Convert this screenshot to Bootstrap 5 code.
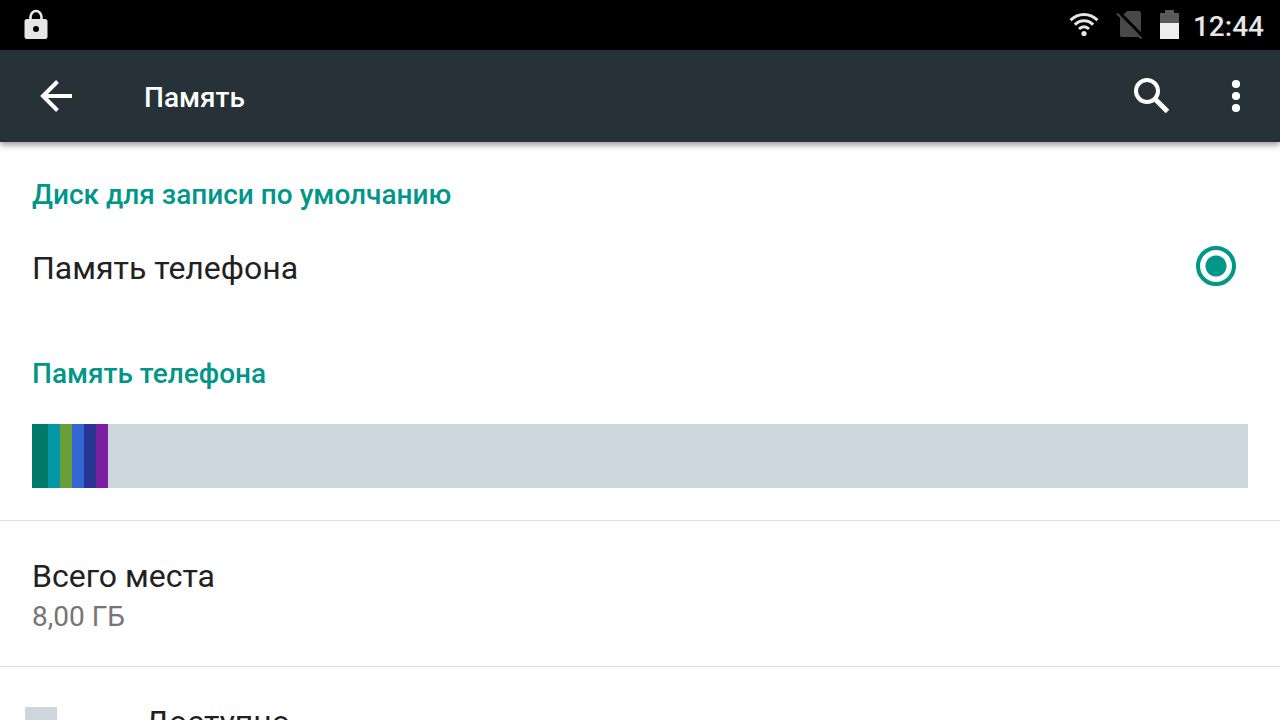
<!DOCTYPE html>
<html lang="ru">
<head>
<meta charset="utf-8">
<meta name="viewport" content="width=device-width, initial-scale=1">
<title>Память</title>
<link href="https://cdn.jsdelivr.net/npm/bootstrap@5.3.0/dist/css/bootstrap.min.css" rel="stylesheet">
<style>
  body { font-family: Roboto, "Noto Sans", sans-serif; color: #212121; }
  .status-bar { height: 50px; background: #000; color: #e6e6e6; padding: 0 16px 0 24px; }
  .clock { font-size: 28px; line-height: 36px; font-weight: 500; padding: 4px 0 0 14px; }
  .app-bar { height: 92px; background: #263238; color: #fff; padding: 0 32px; box-shadow: 0 3px 6px rgba(0, 0, 0, .4); z-index: 1; }
  .app-title { font-size: 28px; line-height: 36px; font-weight: 500; padding: 4px 0 0 64px; }
  .icon-btn { width: 48px; height: 48px; }
  .search-btn { margin-right: 48px; }
  .menu-btn { width: 24px; }
  .settings { min-height: 0; overflow-y: auto; scrollbar-width: none; }
  .settings::-webkit-scrollbar { display: none; }
  .section-title { font-size: 28px; line-height: 36px; font-weight: 500; color: #009688; margin: 0; padding: 35px 32px 5px; }
  .row-title { font-size: 32px; line-height: 40px; }
  .row-sub { font-size: 28px; line-height: 42px; color: #757575; }
  .choice { height: 96px; padding: 0 44px 0 32px; margin-bottom: 7px; }
  .choice .row-title { padding-top: 4px; }
  .choice .form-check-input { width: 40px; height: 40px; margin: 0; border: 4px solid #009688; background: radial-gradient(circle, #009688 10px, transparent 11px); }
  .choice .form-check-input:focus { box-shadow: none; }
  .usage { height: 64px; margin: 27px 32px 32px; border-radius: 0; }
  .list-item { padding: 35px 32px 28px; border-top: 1px solid #dedede; }
  .legend-item { padding-left: 25px; }
  .swatch { width: 32px; height: 32px; margin: 5px 88px 0 0; }
  .c-free { background: #ced6dd; }
  .c-apps { background: #00796b; }
  .c-images { background: #0097a7; }
  .c-video { background: #689f38; }
  .c-audio { background: #3367d6; }
  .c-downloads { background: #283593; }
  .c-cache { background: #7b1fa2; }
</style>
</head>
<body class="bg-white">
<div class="d-flex flex-column vh-100 overflow-hidden">
  <div class="status-bar d-flex align-items-center flex-shrink-0">
    <svg width="24" height="32" viewBox="0 0 24 32" fill="none" aria-hidden="true">
      <path d="M6.500 12V8a5.500 6 0 0 1 11 0v4" stroke="#e6e6e6" stroke-width="2.600"/>
      <path fill="#e6e6e6" fill-rule="evenodd" d="M3 10h18a2.500 2.500 0 0 1 2.500 2.500v15a2.500 2.500 0 0 1-2.500 2.500H3a2.500 2.500 0 0 1-2.500-2.500v-15A2.500 2.500 0 0 1 3 10zm9 7a3 3 0 1 0 0 6 3 3 0 0 0 0-6z"/>
    </svg>
    <div class="d-flex align-items-center ms-auto">
      <svg width="32" height="32" viewBox="0 0 32 32" fill="none" stroke="#e6e6e6" stroke-width="3" aria-hidden="true">
        <path d="M2.500 11.200C10.500 3.600 21.500 3.600 29.500 11.200"/>
        <path d="M6.800 15.700c5.500-5.200 12.900-5.200 18.400 0"/>
        <path d="M11 20c3.100-3 6.900-3 10 0"/>
        <circle cx="16" cy="24.500" r="2.600" fill="#e6e6e6" stroke="none"/>
      </svg>
      <svg class="ms-3" width="28" height="32" viewBox="0 0 28 32" aria-hidden="true">
        <path fill="#484848" d="M7.500 5.500 11 2h12q2 0 2 2v19.300zM4 7.500V26Q4 28 6 28H23z"/>
        <path d="M1 4.500 25.500 29.500" stroke="#484848" stroke-width="2"/>
      </svg>
      <svg class="ms-3" width="19" height="32" viewBox="0 0 19 32" aria-hidden="true">
        <path fill="#5a5a5a" d="M5 1h9v3H19v10H0V4h5z"/>
        <path fill="#eee" d="M0 14h19v16H0z"/>
      </svg>
      <span class="clock">12:44</span>
    </div>
  </div>

  <header class="app-bar d-flex align-items-center flex-shrink-0 position-relative">
    <button class="icon-btn btn p-0 border-0 d-flex align-items-center justify-content-center" type="button" aria-label="Назад">
      <svg width="48" height="48" viewBox="0 0 48 48" fill="none" stroke="#fff" stroke-width="4"><path d="M40 24H11M25.500 9.500 11 24l14.500 14.500"/></svg>
    </button>
    <h1 class="app-title mb-0">Память</h1>
    <button class="icon-btn search-btn btn p-0 border-0 d-flex align-items-center justify-content-center ms-auto" type="button" aria-label="Поиск">
      <svg width="48" height="48" viewBox="0 0 48 48" fill="none" stroke="#fff"><circle cx="19" cy="19" r="11" stroke-width="4"/><path d="M27.500 27.500 39.500 39.500" stroke-width="5"/></svg>
    </button>
    <button class="icon-btn menu-btn btn p-0 border-0 d-flex align-items-center justify-content-center" type="button" aria-label="Ещё">
      <svg width="8" height="32" viewBox="0 0 8 32" fill="#fff" overflow="visible"><circle cx="4" cy="4" r="4.100"/><circle cx="4" cy="16" r="4.100"/><circle cx="4" cy="28" r="4.100"/></svg>
    </button>
  </header>

  <main class="settings flex-grow-1">
    <h2 class="section-title">Диск для записи по умолчанию</h2>
    <div class="choice d-flex align-items-center justify-content-between">
      <label class="row-title flex-grow-1" for="disk-phone">Память телефона</label>
      <input class="form-check-input" type="radio" name="disk" id="disk-phone" checked>
    </div>

    <h2 class="section-title">Память телефона</h2>
    <div class="usage progress c-free">
      <div class="c-apps" style="width:16px"></div>
      <div class="c-images" style="width:12px"></div>
      <div class="c-video" style="width:12px"></div>
      <div class="c-audio" style="width:12px"></div>
      <div class="c-downloads" style="width:12px"></div>
      <div class="c-cache" style="width:12px"></div>
    </div>

    <div class="list-item">
      <div class="row-title">Всего места</div>
      <div class="row-sub">8,00 ГБ</div>
    </div>
    <div class="list-item legend-item d-flex">
      <span class="swatch c-free flex-shrink-0"></span>
      <div class="row-title">Доступно</div>
    </div>
  </main>
</div>
<script src="https://cdn.jsdelivr.net/npm/bootstrap@5.3.0/dist/js/bootstrap.bundle.min.js"></script>
</body>
</html>
